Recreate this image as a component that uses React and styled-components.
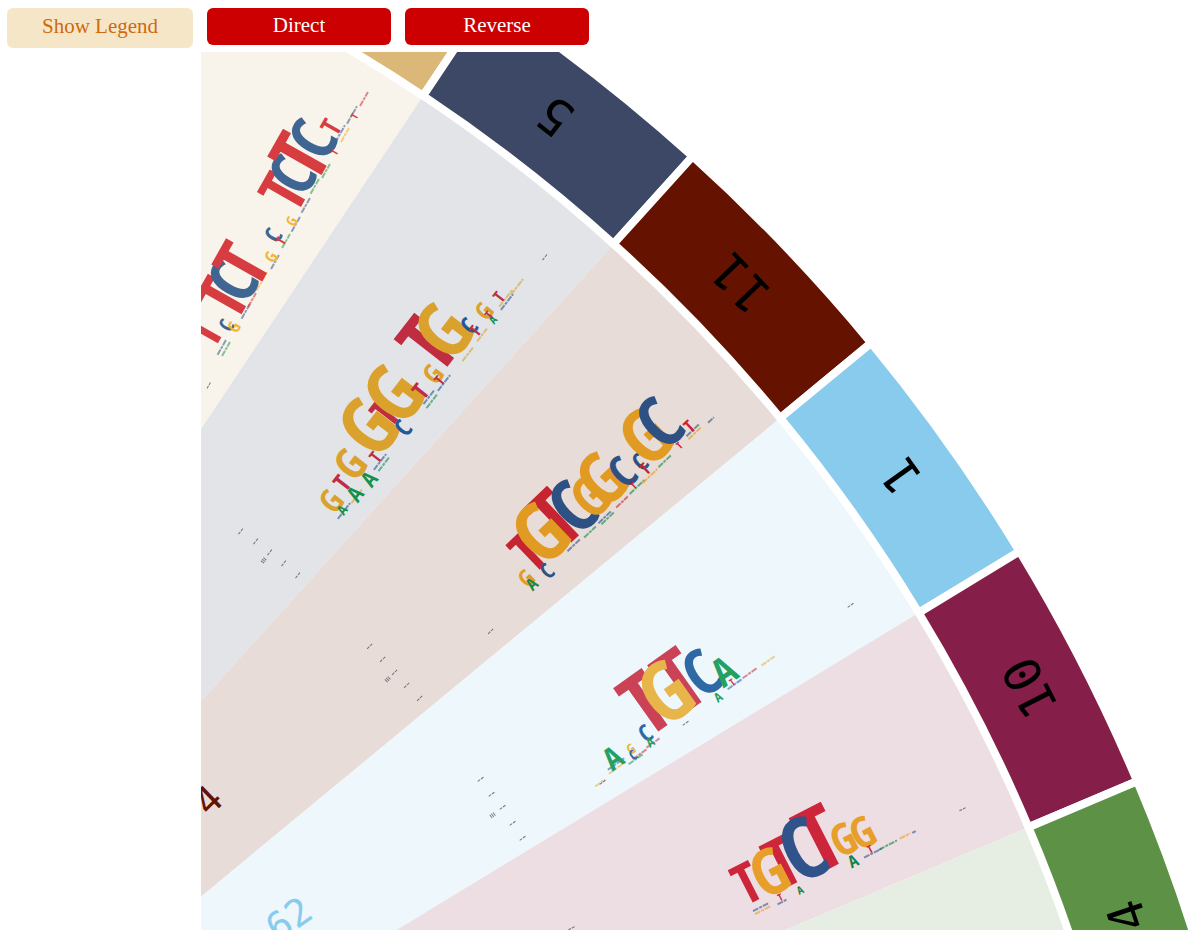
import React from "react";
import styled, { createGlobalStyle } from "styled-components";

const GlobalStyle = createGlobalStyle`
  body {
    margin: 0;
    background: #fff;
    font-family: "Liberation Serif", "Times New Roman", serif;
  }
`;

const Page = styled.div`
  display: flex;
  flex-direction: column;
  height: 100vh;
  overflow: hidden;
`;

const Toolbar = styled.header`
  display: flex;
  align-items: flex-start;
  gap: 14px;
  padding: 8px 7px 4px;
  height: 40px;
  flex: none;
`;

const Button = styled.button`
  width: ${(p) => (p.$soft ? 186 : 184)}px;
  height: ${(p) => (p.$soft ? 40 : 37)}px;
  padding: 0 0 4px;
  border: 0;
  border-radius: 6px;
  background: ${(p) => (p.$soft ? "#f5e6c8" : "#cc0000")};
  color: ${(p) => (p.$soft ? "#cf6a0c" : "#fff")};
  font-family: inherit;
  font-size: 21px;
  line-height: 24px;
  cursor: pointer;
`;

const Stage = styled.main`
  flex: 1;
  min-height: 0;
  margin-left: 201px;
`;

const Wheel = styled.svg`
  display: block;
  width: 100%;
  height: 100%;
  overflow: hidden;
`;

const SectorLabel = styled.text`
  font: 50px "DejaVu Sans Mono", monospace;
  text-anchor: middle;
  fill: #000;
`;

const CountLabel = styled.text`
  font: 38px "DejaVu Sans Mono", monospace;
  text-anchor: middle;
  fill: ${(p) => p.$color};
`;

const Base = styled.text`
  font-family: "Noto Sans ExtraCondensed", "Open Sans Condensed", "Liberation Sans Narrow", "Roboto Condensed", "DejaVu Sans Condensed", sans-serif;
  font-weight: ${(p) => (p.$tall ? 500 : 700)};
  text-anchor: middle;
`;

const CX = -494;
const CY = 1471;

const polar = (r, deg) => {
  const a = (deg * Math.PI) / 180;
  return [CX + r * Math.cos(a), CY - r * Math.sin(a)];
};

const ring = (r0, r1, a0, a1) => {
  const [p, q, s, t] = [polar(r1, a0), polar(r1, a1), polar(r0, a1), polar(r0, a0)];
  return `M${p}A${r1} ${r1} 0 0 0 ${q}L${s}A${r0} ${r0} 0 0 1 ${t}Z`;
};

// Each letter is [base, x, y, cap height]; flats are low-information stacks
// as [x, y, length, color].
const SECTORS = [
  {
    id: "3", from: 56.3, to: 64.7, mid: 60.5, fill: "#dbb878", pale: "#f8f4ec", hideLabel: true,
    colors: { T: "#d73c41", C: "#3f6593", G: "#f2b534", A: "#35a355" },
    letters: [
      ["T", 203, 331, 38], ["T", 222, 298, 50], ["C", 232, 281, 49], ["T", 241, 264, 53],
      ["C", 226, 325, 15], ["G", 234, 327, 12], ["C", 273, 235, 17], ["T", 281, 241, 10],
      ["G", 271, 257, 12], ["G", 291, 221, 11], ["T", 283, 192, 46], ["C", 292, 175, 46],
      ["T", 299, 156, 57], ["C", 312, 139, 47], ["T", 331, 127, 20], ["T", 334, 152, 7], ["T", 354, 116, 7],
    ],
    flats: [
      [222, 347, 18, "C"], [226, 349, 16, "A"], [246, 311, 18, "C"], [252, 300, 16, "T"],
      [262, 281, 22, "G"], [275, 262, 16, "C"], [286, 241, 16, "A"], [296, 224, 18, "C"],
      [306, 205, 18, "C"], [315, 186, 18, "A"], [326, 171, 16, "A"], [340, 134, 20, "C"],
      [345, 135, 16, "G"], [352, 115, 20, "C"], [364, 99, 16, "T"],
    ],
  },
  {
    id: "5", from: 47.93, to: 56.3, mid: 52.15, fill: "#3d4866", pale: "#e2e4e8",
    colors: { T: "#c02c40", C: "#235896", G: "#daa22d", A: "#14914a" },
    letters: [
      ["G", 331, 501, 24], ["T", 342, 483, 18], ["A", 355, 494, 16], ["A", 369, 479, 16],
      ["A", 342, 510, 10], ["G", 350, 464, 32], ["T", 385, 413, 30], ["G", 368, 427, 58],
      ["T", 375, 457, 13], ["G", 393, 394, 58], ["C", 403, 428, 18], ["T", 420, 391, 17],
      ["G", 433, 374, 20], ["T", 439, 380, 11], ["T", 427, 344, 60], ["G", 443, 331, 56],
      ["C", 469, 326, 18], ["G", 484, 311, 18], ["T", 475, 331, 12], ["T", 489, 315, 9],
      ["T", 499, 297, 12], ["A", 493, 320, 8],
    ],
    flats: [
      [344, 511, 20, "C"], [357, 496, 18, "G"], [380, 462, 20, "C"], [384, 464, 18, "A"],
      [429, 397, 18, "C"], [432, 401, 18, "A"], [444, 383, 20, "C"], [468, 354, 18, "G"],
      [482, 335, 16, "G"], [506, 298, 22, "G"], [507, 302, 20, "C"], [517, 287, 20, "G"],
    ],
  },
  {
    id: "11", from: 39.57, to: 47.93, mid: 43.8, fill: "#651200", pale: "#e7dcd8",
    colors: { T: "#c62431", C: "#2c5182", G: "#e29b22", A: "#158845" },
    letters: [
      ["T", 528, 552, 42], ["T", 555, 518, 58], ["G", 540, 533, 58], ["C", 572, 507, 53],
      ["G", 590, 497, 40], ["G", 601, 479, 52], ["C", 622, 472, 32], ["C", 640, 462, 18],
      ["T", 645, 469, 12], ["G", 645, 437, 54], ["C", 659, 423, 52], ["G", 526, 578, 17],
      ["C", 547, 571, 16], ["A", 532, 584, 12], ["T", 689, 426, 13], ["T", 679, 445, 7], ["T", 633, 485, 7],
    ],
    flats: [
      [574, 545, 18, "C"], [590, 532, 16, "A"], [605, 517, 18, "C"], [608, 518, 18, "A"],
      [622, 502, 16, "T"], [637, 487, 20, "A"], [650, 476, 20, "G"], [665, 461, 18, "A"],
      [693, 430, 18, "C"], [695, 433, 18, "G"], [711, 420, 8, "C"],
    ],
  },
  {
    id: "1", from: 31.28, to: 39.57, mid: 35.4, fill: "#88cbec", pale: "#edf7fc",
    colors: { T: "#cb4257", C: "#2f69a5", G: "#e7b549", A: "#24a062" },
    letters: [
      ["A", 613, 758, 22], ["G", 631, 749, 10], ["C", 633, 755, 10], ["C", 645, 733, 17],
      ["A", 650, 742, 9], ["T", 645, 703, 62], ["T", 679, 680, 62], ["G", 665, 692, 60],
      ["C", 701, 673, 46], ["A", 724, 671, 28], ["A", 718, 697, 9], ["T", 732, 682, 7],
    ],
    flats: [
      [616, 764, 20, "C"], [617, 768, 20, "G"], [636, 759, 18, "A"], [640, 754, 18, "T"],
      [653, 743, 16, "T"], [600, 783, 12, "G"], [735, 684, 18, "C"], [750, 673, 18, "T"],
      [768, 661, 16, "G"],
    ],
  },
  {
    id: "10", from: 22.92, to: 31.28, mid: 27.1, fill: "#851f4a", pale: "#eddee3",
    colors: { T: "#cd263b", C: "#30538a", G: "#e79e2b", A: "#158245" },
    letters: [
      ["T", 747, 883, 40], ["T", 782, 862, 50], ["G", 769, 872, 46], ["T", 819, 838, 64],
      ["C", 802, 849, 62], ["G", 843, 839, 32], ["G", 862, 832, 31], ["A", 800, 890, 8],
      ["A", 853, 861, 12], ["T", 870, 849, 8], ["T", 780, 897, 7],
    ],
    flats: [
      [761, 907, 18, "C"], [763, 910, 18, "G"], [782, 902, 10, "C"], [873, 853, 20, "C"],
      [888, 845, 20, "A"], [905, 836, 12, "G"], [914, 832, 4, "C"],
    ],
  },
  {
    id: "4", from: 14.5, to: 22.92, mid: 18.8, fill: "#5c9146", pale: "#e6eee3",
    colors: {}, letters: [], flats: [],
  },
];

const COUNTS = [
  { value: "4", r: 971, mid: 43.8, color: "#651200" },
  { value: "62", r: 958, mid: 35.3, color: "#88cbec" },
];

// Axis ticks: [x, y, angle]
const TICKS = [
  [241, 531, 52], [256, 541, 52], [270, 552, 52], [284, 563, 52], [298, 575, 52],
  [370, 646, 44], [383, 659, 44], [395, 672, 44], [407, 685, 44], [420, 698, 44],
  [481, 779, 35], [492, 794, 35], [503, 807, 35], [513, 823, 35], [523, 838, 35],
  [545, 257, 52], [851, 605, 35], [963, 809, 27], [491, 631, 44], [603, 782, 35],
  [572, 928, 27], [209, 385, 60], [686, 723, 35],
];

const MARKS = [[264, 560, 52], [388, 679, 44], [493, 815, 35]];

function Sector({ sector }) {
  const { from, to, mid, fill, pale, colors, letters, flats } = sector;
  const [lx, ly] = polar(1713, mid + 0.1);
  return (
    <g>
      <path d={ring(10, 1653, from, to)} fill={pale} />
      <path d={ring(1653, 1771, from, to)} fill={fill} stroke="#fff" strokeWidth="8" />
      {flats.map(([x, y, length, base], i) => (
        <g key={i} transform={`translate(${x} ${y}) rotate(${-mid})`}>
          <line x1={-length / 2} x2={length / 2} stroke={colors[base]} strokeWidth="2" strokeDasharray="6 1 3 1" opacity="0.6" />
        </g>
      ))}
      {letters.map(([base, x, y, cap], i) => (
        <g key={i} transform={`translate(${x} ${y}) rotate(${-mid})`}>
          <Base $tall={cap > 45} fontSize={Math.round(cap / 0.72)} y={Math.round(cap / 2)} fill={colors[base]}>{base}</Base>
        </g>
      ))}
      {!sector.hideLabel && (
        <g transform={`translate(${lx} ${ly}) rotate(${-90 - mid})`}>
          <SectorLabel y="18">{sector.id}</SectorLabel>
        </g>
      )}
    </g>
  );
}

export default function App() {
  return (
    <Page>
      <GlobalStyle />
      <Toolbar>
        <Button $soft type="button">Show Legend</Button>
        <Button type="button">Direct</Button>
        <Button type="button">Reverse</Button>
      </Toolbar>
      <Stage>
        <Wheel role="img" aria-label="Motif wheel">
          <g transform="translate(-201 -52)">
            {SECTORS.map((s) => <Sector key={s.id} sector={s} />)}
            {TICKS.map(([x, y, a], i) => (
              <g key={i} transform={`translate(${x} ${y}) rotate(${-a})`}>
                <line x1="-4" x2="4" stroke="#4b4b60" strokeWidth="1" strokeDasharray="3 1" opacity="0.75" />
              </g>
            ))}
            {MARKS.map(([x, y, a], i) => (
              <g key={i} transform={`translate(${x} ${y}) rotate(${-a})`}>
                <line x1="-3" x2="3" stroke="#4b4b60" strokeWidth="4" strokeDasharray="1 1" opacity="0.7" />
              </g>
            ))}
            {COUNTS.map(({ value, r, mid, color }) => {
              const [x, y] = polar(r, mid);
              return (
                <g key={value} transform={`translate(${x} ${y}) rotate(${-mid})`}>
                  <CountLabel y="15" $color={color}>{value}</CountLabel>
                </g>
              );
            })}
          </g>
        </Wheel>
      </Stage>
    </Page>
  );
}
